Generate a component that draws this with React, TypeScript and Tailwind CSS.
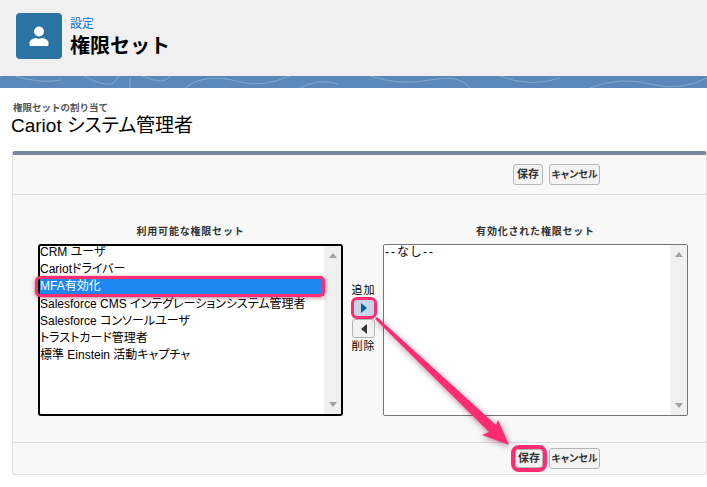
const font = {
  fontFamily: '"Liberation Sans", "Noto Sans CJK JP", sans-serif',
};

const available = [
  "CRM ユーザ",
  "Cariotドライバー",
  "MFA有効化",
  "Salesforce CMS インテグレーションシステム管理者",
  "Salesforce コンソールユーザ",
  "トラストカード管理者",
  "標準 Einstein 活動キャプチャ",
];

const ActionButton = ({
  label,
  className,
}: {
  label: string;
  className: string;
}) => (
  <button
    className={`whitespace-nowrap rounded-[3px] border border-[#b5b5b5] bg-[#f3f3f3] p-0 font-bold leading-none text-[#333] [font-feature-settings:'palt'] ${className}`}
  >
    {label}
  </button>
);

const ButtonRow = ({ markSave }: { markSave?: boolean }) => (
  <div className="flex items-center justify-end gap-[6px] pr-[106px]">
    <ActionButton
      label="保存"
      className={
        markSave
          ? "h-[19px] w-[28px] rounded-[4px] text-[11px] outline-[4px] outline-[#ff2d6f] shadow-[0_0_5px_rgba(120,0,40,0.4)]"
          : "h-[21px] w-[30px] text-[11px]"
      }
    />
    <ActionButton label="キャンセル" className="h-[21px] w-[51px] text-[10px]" />
  </div>
);

const ScrollTrack = () => (
  <div className="flex w-[17px] shrink-0 flex-col items-center justify-between bg-[#f0f0f0] py-[7px]">
    <div className="h-0 w-0 border-x-[4px] border-b-[5px] border-x-transparent border-b-[#a3a3a3]" />
    <div className="h-0 w-0 border-x-[4px] border-t-[5px] border-x-transparent border-t-[#a3a3a3]" />
  </div>
);

const Band = () => (
  <svg className="block h-[12px] w-full" viewBox="0 0 707 12" preserveAspectRatio="none">
    <rect width="707" height="12" fill="#5b8aba" />
    <g fill="none" stroke="#86a9cc" strokeWidth="1">
      <path d="M15 0 Q40 8 62 4" />
      <path d="M84 0 Q110 14 116 4 T120 0" />
      <path d="M130 12 V2" />
      <path d="M142 0 Q165 10 170 0" />
      <path d="M185 12 Q205 -4 240 6 Q262 12 290 0" />
      <path d="M300 12 Q318 2 338 8" />
      <path d="M370 0 Q400 10 430 4 T470 12" />
      <path d="M500 0 Q530 12 560 2" />
      <path d="M590 12 Q620 0 650 8 T707 2" />
    </g>
  </svg>
);

export default function App() {
  return (
    <div className="relative h-[487px] w-[707px] overflow-hidden bg-white" style={font}>
      <header className="flex h-[76px] items-start gap-[8px] rounded-b-[4px] bg-[#f0f0f0] pl-[16px] pt-[13px]">
        <div className="flex h-[46px] w-[46px] items-center justify-center rounded-[4px] bg-[#2a73a3]">
          <svg width="22" height="22" viewBox="0 0 22 22" fill="#fff">
            <circle cx="11" cy="6.500" r="5" />
            <path d="M1.500 20v-2.200c0-2.600 3.600-4.300 6-4.800 1.800 1 5.200 1 7 0 2.400.5 6 2.200 6 4.800V20c0 .5-.5 1-1 1H2.500c-.5 0-1-.5-1-1z" />
          </svg>
        </div>
        <div>
          <div className="mt-[3px] text-[12px] leading-[16px] text-[#0a74d8]">設定</div>
          <div className="mt-[1px] text-[20px] font-bold leading-[26px] text-black">権限セット</div>
        </div>
      </header>

      <Band />

      <main className="rounded-t-[4px] bg-white px-[12px] pt-[14px]">
        <div className="ml-[1px] text-[9.5px] font-bold leading-[12px] text-[#555]">権限セットの割り当て</div>
        <div className="-ml-[1px] text-[19px] leading-[23px] text-black [font-feature-settings:'palt']">
          Cariot システム管理者
        </div>

        <section className="mt-[14px] -mr-[12px] h-[324px] rounded-[3px] border border-t-[4px] border-[#e0e0e0] border-t-[#7a859f] bg-[#f8f8f8]">
          <div className="flex h-[40px] items-center border-b border-[#dcdcdc]">
            <div className="w-full">
              <ButtonRow />
            </div>
          </div>

          <div className="flex h-[247px] items-start pl-[25px] pt-[30px]">
            <div className="w-[305px]">
              <div className="mb-[5px] text-center text-[10px] font-bold leading-[14px] tracking-[0.8px] text-[#333]">
                利用可能な権限セット
              </div>
              <div className="flex h-[172px] overflow-hidden rounded-[3px] border-2 border-black bg-white">
                <ul className="-mt-[2px] min-w-0 flex-1 text-[12px] leading-[17.2px] text-black [font-feature-settings:'palt']">
                  {available.map((item) => (
                    <li
                      key={item}
                      className={`whitespace-nowrap ${
                        item === "MFA有効化" ? "bg-[#1e88f0] text-white" : ""
                      }`}
                    >
                      {item}
                    </li>
                  ))}
                </ul>
                <ScrollTrack />
              </div>
            </div>

            <div className="flex w-[40px] flex-col items-center pl-[1px] pt-[58px] text-[11px] leading-[14px] tracking-[1px] text-black">
              <span className="mb-[3px]">追加</span>
              <button className="flex h-[16px] w-[20px] items-center justify-center rounded-[3px] bg-[#c6d6e6] outline-[3px] outline-[#ff2d6f]">
                <span className="h-0 w-0 border-y-[5px] border-l-[6px] border-y-transparent border-l-[#0b5c9e]" />
              </button>
              <button className="mt-[3px] flex h-[19px] w-[23px] items-center justify-center rounded-[3px] border border-[#b5b5b5] bg-[#f3f3f3]">
                <span className="h-0 w-0 border-y-[5px] border-r-[6px] border-y-transparent border-r-[#333]" />
              </button>
              <span className="mt-[1px]">削除</span>
            </div>

            <div className="w-[305px]">
              <div className="mb-[5px] text-center text-[10px] font-bold leading-[14px] tracking-[0.8px] text-[#333]">
                有効化された権限セット
              </div>
              <div className="flex h-[172px] overflow-hidden rounded-[2px] border border-[#767676] bg-white">
                <div className="min-w-0 flex-1 pl-[1px] text-[12px] leading-[15px] tracking-[2px] text-black [font-feature-settings:'palt']">
                  --なし--
                </div>
                <ScrollTrack />
              </div>
            </div>
          </div>

          <div className="flex h-[32px] items-center border-t border-[#dcdcdc]">
            <div className="w-full">
              <ButtonRow markSave />
            </div>
          </div>
        </section>
      </main>

      {/* annotation: row highlight */}
      <div className="absolute left-[35px] top-[276px] h-[21px] w-[290px] rounded-[5px] border-[3px] border-[#ff2d6f] shadow-[0_1px_4px_rgba(120,0,40,0.5)]" />

      {/* annotation: arrow */}
      <svg className="pointer-events-none absolute left-0 top-0" width="707" height="487" viewBox="0 0 707 487">
        <polygon
          points="377,317 496,425 498,420 509,445 482,435 489,432 375,319"
          fill="#ff2d6f"
          style={{ filter: "drop-shadow(1px 2px 3px rgba(90,0,30,0.45))" }}
        />
      </svg>
    </div>
  );
}
